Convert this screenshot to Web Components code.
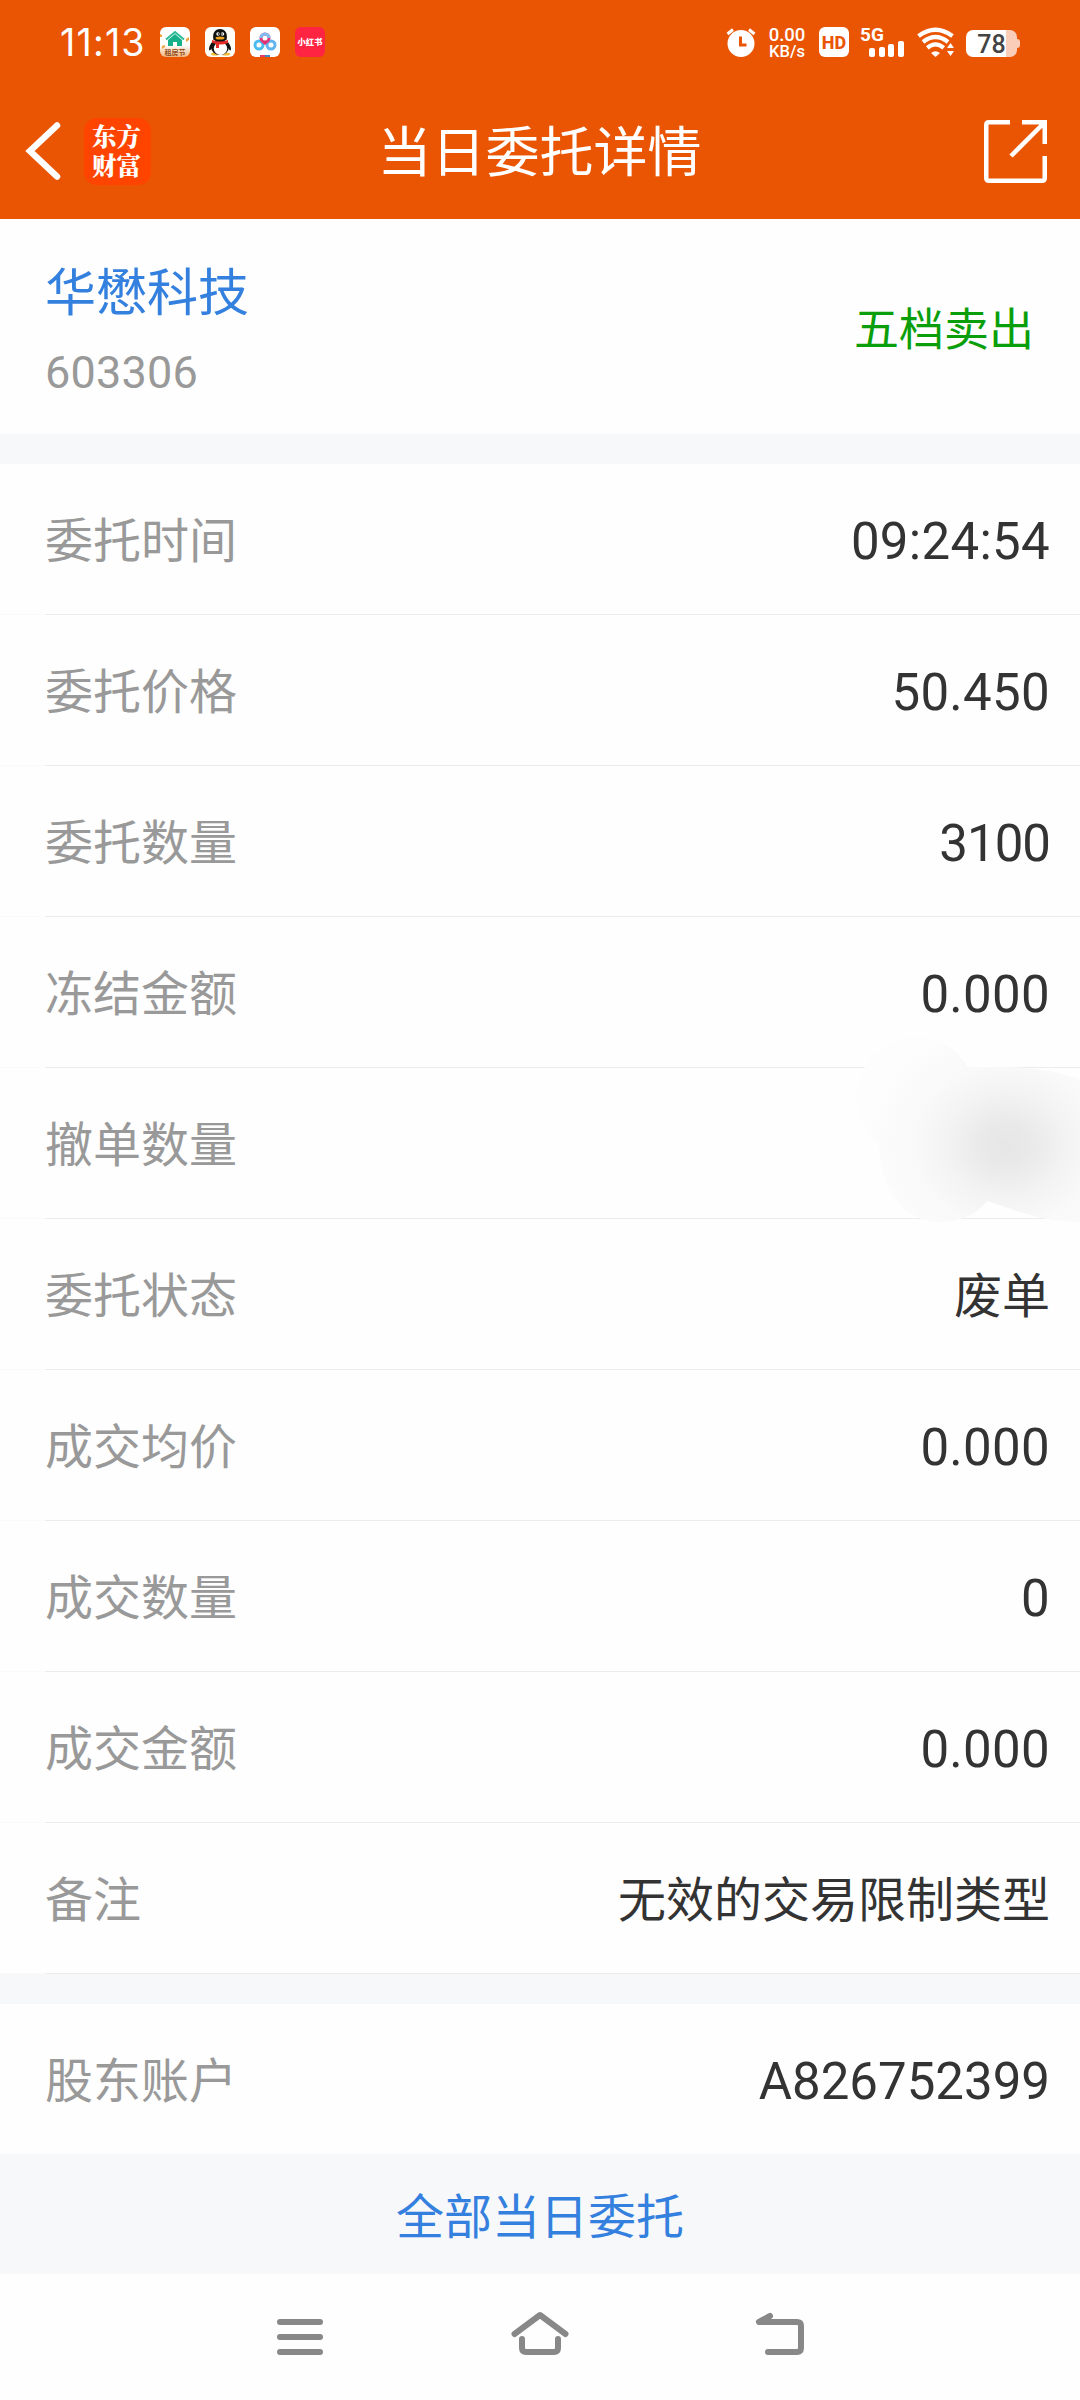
<!DOCTYPE html>
<html lang="zh-CN">
<head>
<meta charset="UTF-8">
<title>当日委托详情</title>
<style>
  body {
    margin: 0;
    width: 1080px;
    height: 2400px;
    overflow: hidden;
    background: #fefefe;
    font-family: Roboto, "Noto Sans CJK SC", sans-serif;
    --orange: #ea5504;
    --blue: #3480de;
    --band: #f7f8fa;
  }
</style>
</head>
<body>
<order-page></order-page>

<script>
class StatusBar extends HTMLElement {
  constructor() {
    super();
    this.attachShadow({ mode: 'open' });
    this.shadowRoot.innerHTML = `
      <style>
        :host {
          display: flex;
          justify-content: space-between;
          height: 57px;
          padding: 27px 60px 0 60px;
          box-sizing: border-box;
          color: #fff;
        }
        svg { display: block; flex: none; }
        .left, .right { display: flex; height: 30px; }
        .time {
          width: 100px;
          font: 400 37.5px/32px Inter, sans-serif;
          letter-spacing: 1.2px;
          white-space: nowrap;
        }
        .apps { display: flex; gap: 15px; }
        .speed {
          width: 40px;
          margin-left: 11px;
          text-align: center;
          font-weight: 500;
          white-space: nowrap;
        }
        .speed div { font-size: 18.5px; line-height: 17px; }
        .speed div + div { font-size: 16.5px; line-height: 15px; }
        .hd {
          width: 30px;
          margin-left: 12px;
          border-radius: 6px;
          background: #fff;
          color: var(--orange);
          font: 800 18px/31px Roboto, sans-serif;
          text-align: center;
        }
        .signal { width: 46px; margin-left: 11px; }
        .signal span {
          display: block;
          height: 14px;
          font: 700 19px/16px Roboto, sans-serif;
        }
        .bars { display: flex; align-items: flex-end; gap: 3.6px; height: 16px; padding-left: 9px; }
        .bars i { width: 6px; border-radius: 2px; background: #fff; }
        .wifi { margin-left: 11px; }
        .battery { display: flex; align-items: center; margin: 3px 0 0 11px; height: 27px; }
        .cell {
          width: 51px;
          height: 27px;
          border-radius: 7px;
          background: linear-gradient(90deg, #fff 40px, #f9cdb7 40px);
          color: #444;
          font: 500 25px/29px Roboto, sans-serif;
          text-align: center;
        }
        .cap { width: 3px; height: 9px; border-radius: 0 3px 3px 0; background: #f9cdb7; }
      </style>
      <div class="left">
        <div class="time">11:13</div>
        <div class="apps">
          <svg width="30" height="30" viewBox="0 0 30 30">
            <defs><linearGradient id="g" x1="0" y1="0" x2="0" y2="1">
              <stop offset=".6" stop-color="#fff"/><stop offset="1" stop-color="#f3b27a"/>
            </linearGradient></defs>
            <rect width="30" height="30" rx="6" fill="url(#g)"/>
            <path d="M6 12.500 15 5l9 7.500" fill="none" stroke="#2dbb98" stroke-width="2"/>
            <path d="M8 13 15 7l7 6v6h-5v-4h-4v4H8z" fill="#16b18b"/>
            <path d="M2 19l3-1v2l-3 2zM26 12l3-2v3l-3 2zM0 7l2 1v2H0z" fill="#f2a33a"/>
            <text x="15" y="28" text-anchor="middle" font-size="7" font-weight="700" fill="#92501f" font-family="Noto Sans CJK SC">租房节</text>
          </svg>
          <svg width="30" height="30" viewBox="0 0 30 30">
            <rect width="30" height="30" rx="6" fill="#fffdf8"/>
            <ellipse cx="10" cy="27" rx="4" ry="1.500" fill="#f4bd36"/>
            <ellipse cx="21" cy="27" rx="4" ry="1.500" fill="#f4bd36"/>
            <path d="M8 14C6 16 4 19 4 22c0 2 1 2 3-1M22 14c2 2 4 5 4 8 0 2-1 2-3-1" fill="#111"/>
            <ellipse cx="15" cy="20" rx="9" ry="8" fill="#111"/>
            <ellipse cx="15.500" cy="21.500" rx="6.700" ry="6.500" fill="#fff"/>
            <path d="M8.500 13C7 6 10 2 15 2s8 4 6.500 11z" fill="#111"/>
            <circle cx="13" cy="7" r="1.700" fill="#fff"/><circle cx="17.500" cy="7" r="1.700" fill="#fff"/>
            <circle cx="13.400" cy="7" r=".8"/><circle cx="17" cy="7" r=".8"/>
            <ellipse cx="15" cy="11" rx="4.500" ry="1.500" fill="#f2a51e"/>
            <path d="M7 13q8 3 16 0v3q-5 2-9 1.500V21h-3v-4l-4-1.500z" fill="#e32b28"/>
          </svg>
          <svg width="30" height="30" viewBox="0 0 30 30">
            <rect width="30" height="30" rx="6" fill="#fff"/>
            <g fill="none" stroke-width="3">
              <circle cx="9" cy="18" r="4" stroke="#4cbcf0"/>
              <circle cx="21" cy="18" r="4" stroke="#62b4ee"/>
              <circle cx="15" cy="11" r="4" stroke="#e4387a"/>
              <path d="M11 11a4 4 0 0 1 8 0" stroke="#7dbdf0"/>
            </g>
            <circle cx="15" cy="16" r="1.800" fill="#dc2f70"/>
            <path d="M10 28h5v2h-5z" fill="#e63c66"/><path d="M15 28h5v2h-5z" fill="#4286c0"/>
          </svg>
          <svg width="30" height="30" viewBox="0 0 30 30">
            <rect width="30" height="30" rx="6" fill="#ff2442"/>
            <text x="15" y="18.200" text-anchor="middle" font-size="8.300" font-weight="900" fill="#fff" font-family="Noto Sans CJK SC">小红书</text>
          </svg>
        </div>
      </div>
      <div class="right">
        <svg width="30" height="30" viewBox="0 0 30 30">
          <circle cx="15" cy="16.500" r="13.500" fill="#fff"/>
          <path d="M1.500 7 7 2.500M28.500 7 23 2.500" stroke="#fff" stroke-width="3"/>
          <path d="M14.500 9.500v8.500h6" fill="none" stroke="#ea5504" stroke-width="3"/>
        </svg>
        <div class="speed"><div>0.00</div><div>KB/s</div></div>
        <div class="hd">HD</div>
        <div class="signal">
          <span>5G</span>
          <div class="bars"><i style="height:9px"></i><i style="height:10px"></i><i style="height:13px"></i><i style="height:16px"></i></div>
        </div>
        <svg class="wifi" width="38" height="30" viewBox="0 0 38 30">
          <g fill="none" stroke="#fff" stroke-width="4.200">
            <path d="M1.500 9Q18.500-3.500 35.500 9"/>
            <path d="M6 15Q18.500 5 31 15"/>
            <path d="M10.300 20.800Q18.500 14 26.700 20.800"/>
          </g>
          <path d="M14 26q4.500-3.500 9 0l-4.500 4zM30 21l3.500-5 3.500 5zM30 24h7l-3.500 5z" fill="#fff"/>
        </svg>
        <div class="battery"><div class="cell">78</div><div class="cap"></div></div>
      </div>
    `;
  }
}

class TitleBar extends HTMLElement {
  constructor() {
    super();
    this.attachShadow({ mode: 'open' });
    this.shadowRoot.innerHTML = `
      <style>
        :host {
          display: grid;
          grid-template-columns: 1fr auto 1fr;
          align-items: center;
          height: 162px;
          padding: 26px 33px 0 24px;
          box-sizing: border-box;
          color: #fff;
        }
        .back { display: flex; align-items: center; gap: 21px; }
        .logo {
          width: 67px;
          height: 67px;
          box-sizing: border-box;
          padding: 3px 9px 0 8px;
          border-radius: 13px;
          background: #ff4400;
          font: 900 24.5px/29px "Noto Serif CJK SC", "Noto Sans CJK SC", serif;
        }
        .title { padding: 6px 0 0 8px; font-size: 54px; line-height: 80px; white-space: nowrap; }
        .share { justify-self: end; }
        svg { display: block; }
      </style>
      <div class="back">
        <svg width="39" height="60" viewBox="0 0 39 60">
          <path d="M33 4.500 6 30 33 55.500" fill="none" stroke="#fff" stroke-width="6.500" stroke-linecap="round"/>
        </svg>
        <div class="logo">东方财富</div>
      </div>
      <div class="title"><slot></slot></div>
      <div class="share">
        <svg width="63" height="63" viewBox="0 0 63 63" fill="none" stroke="#fff" stroke-width="4.500">
          <path d="M26 2.250H5Q2.250 2.250 2.250 5v53q0 2.750 2.750 2.750h53q2.750 0 2.750-2.750V36"/>
          <path d="M38 2.250h22.750V24M60 3 27 36"/>
        </svg>
      </div>
    `;
  }
}

class StockCard extends HTMLElement {
  constructor() {
    super();
    this.attachShadow({ mode: 'open' });
    this.shadowRoot.innerHTML = `
      <style>
        :host {
          display: flex;
          justify-content: space-between;
          height: 215px;
          padding: 0 46px 0 45px;
          box-sizing: border-box;
        }
        .name { padding-top: 37px; font-size: 51px; line-height: 76px; color: var(--blue); }
        .code { padding-top: 11px; font-size: 45px; line-height: 60px; letter-spacing: .2px; color: #999; }
        .side { padding-top: 78px; font-size: 45px; line-height: 68px; color: #0a9f0a; }
      </style>
      <div>
        <div class="name"><slot name="name"></slot></div>
        <div class="code"><slot name="code"></slot></div>
      </div>
      <div class="side"><slot name="side"></slot></div>
    `;
  }
}

class DetailRow extends HTMLElement {
  constructor() {
    super();
    this.attachShadow({ mode: 'open' });
    this.shadowRoot.innerHTML = `
      <style>
        :host {
          display: flex;
          position: relative;
          align-items: center;
          justify-content: space-between;
          height: 151px;
          padding: 5px 30px 0 45px;
          box-sizing: border-box;
          background: linear-gradient(90deg, #fafafa 45px, #ececec 45px) bottom / 100% 1px no-repeat;
        }
        :host([plain]) { height: 150px; background: none; }
        .label { font-size: 48px; line-height: 72px; color: #999; }
        .value { font-size: 48px; line-height: 72px; color: #333; }
        .value.num { font-size: 51px; letter-spacing: var(--tracking, .3px); }
      </style>
      <div class="label"></div>
      <div class="value"></div>
      <slot></slot>
    `;
  }

  connectedCallback() {
    const value = this.getAttribute('value') || '';
    const box = this.shadowRoot.querySelector('.value');
    this.shadowRoot.querySelector('.label').textContent = this.getAttribute('label');
    box.textContent = value;
    box.classList.toggle('num', /^[A-Z0-9.:]+$/.test(value));
  }
}

// grey smear laid over a value that should stay hidden
class SmudgeMask extends HTMLElement {
  constructor() {
    super();
    this.attachShadow({ mode: 'open' });
    this.shadowRoot.innerHTML = `
      <style>
        :host { position: absolute; right: 0; top: -33px; z-index: 1; }
        svg { display: block; }
      </style>
      <svg width="230" height="192" viewBox="850 1035 230 192">
        <defs>
          <radialGradient id="s" gradientUnits="userSpaceOnUse" cx="0" cy="0" r="1"
            gradientTransform="translate(1006 1145) scale(142 125)">
            <stop offset="0" stop-color="#e6e6e6"/>
            <stop offset=".17" stop-color="#e9e9e9"/>
            <stop offset=".42" stop-color="#f3f3f3"/>
            <stop offset=".65" stop-color="#f9f9f9"/>
            <stop offset=".85" stop-color="#fbfbfb"/>
            <stop offset="1" stop-color="#fdfdfd"/>
          </radialGradient>
        </defs>
        <path fill="url(#s)" d="M968 1067C956 1048 938 1037 917 1037C883 1037 857 1064 857 1097
          C857 1116 866 1133 879 1144C879 1190 904 1222 941 1222C960 1222 976 1215 987 1201
          C1022 1212 1042 1222 1080 1222V1079Q1045 1067 1005 1067Z"/>
      </svg>
    `;
  }
}

class NavBar extends HTMLElement {
  constructor() {
    super();
    this.attachShadow({ mode: 'open' });
    this.shadowRoot.innerHTML = `
      <style>
        :host {
          display: flex;
          justify-content: center;
          align-items: center;
          gap: 180px;
          height: 126px;
          padding-bottom: 6px;
          box-sizing: border-box;
        }
      </style>
      <svg width="60" height="60" viewBox="0 0 60 60" fill="none" stroke="#888" stroke-width="6" stroke-linecap="round">
        <path d="M10 18h40M10 33h40M10 48h40"/>
      </svg>
      <svg width="60" height="60" viewBox="0 0 60 60" fill="none" stroke="#888" stroke-width="6" stroke-linecap="round" stroke-linejoin="round">
        <path d="M4.500 30 30 11l25.500 19"/>
        <path d="M12 35v9q0 4 4 4h28q4 0 4-4v-9"/>
      </svg>
      <svg width="60" height="60" viewBox="0 0 60 60" fill="none" stroke="#888" stroke-width="6" stroke-linecap="round" stroke-linejoin="round">
        <path d="M20 12 9 18h38q4 0 4 4v22q0 4-4 4H18"/>
      </svg>
    `;
  }
}

class OrderPage extends HTMLElement {
  constructor() {
    super();
    this.attachShadow({ mode: 'open' });
    this.shadowRoot.innerHTML = `
      <style>
        :host { display: flex; flex-direction: column; }
        header { height: 219px; background: var(--orange); }
        .band { height: 30px; background: var(--band); }
        .all {
          height: 120px;
          padding-top: 4px;
          box-sizing: border-box;
          background: var(--band);
          color: var(--blue);
          font-size: 48px;
          line-height: 120px;
          text-align: center;
        }
      </style>
      <header>
        <status-bar></status-bar>
        <title-bar>当日委托详情</title-bar>
      </header>
      <stock-card>
        <span slot="name">华懋科技</span>
        <span slot="code">603306</span>
        <span slot="side">五档卖出</span>
      </stock-card>
      <div class="band"></div>
      <detail-row label="委托时间" value="09:24:54"></detail-row>
      <detail-row label="委托价格" value="50.450"></detail-row>
      <detail-row label="委托数量" value="3100" style="--tracking: -1px"></detail-row>
      <detail-row label="冻结金额" value="0.000"></detail-row>
      <detail-row label="撤单数量"><smudge-mask></smudge-mask></detail-row>
      <detail-row label="委托状态" value="废单"></detail-row>
      <detail-row label="成交均价" value="0.000"></detail-row>
      <detail-row label="成交数量" value="0"></detail-row>
      <detail-row label="成交金额" value="0.000"></detail-row>
      <detail-row label="备注" value="无效的交易限制类型"></detail-row>
      <div class="band"></div>
      <detail-row plain label="股东账户" value="A826752399" style="--tracking: 0"></detail-row>
      <div class="all">全部当日委托</div>
      <nav-bar></nav-bar>
    `;
  }
}

customElements.define('status-bar', StatusBar);
customElements.define('title-bar', TitleBar);
customElements.define('stock-card', StockCard);
customElements.define('detail-row', DetailRow);
customElements.define('smudge-mask', SmudgeMask);
customElements.define('nav-bar', NavBar);
customElements.define('order-page', OrderPage);
</script>
</body>
</html>
